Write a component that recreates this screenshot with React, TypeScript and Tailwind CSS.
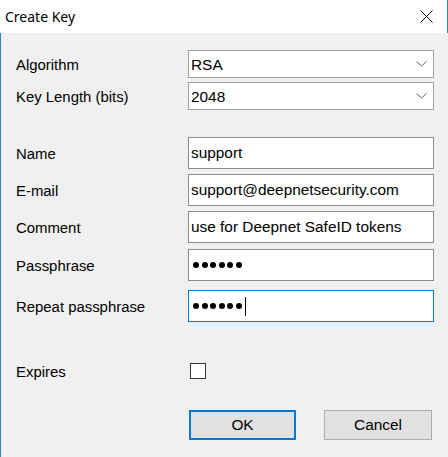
import React from "react";

const font = { fontFamily: '"Liberation Sans", Arial, sans-serif' };

function Chevron() {
  return (
    <svg width="11" height="6" viewBox="0 0 11 6" className="absolute right-[6px] top-1/2 -translate-y-1/2">
      <polyline points="0.5,0.5 5.5,5 10.5,0.5" fill="none" stroke="#606060" strokeWidth="1" />
    </svg>
  );
}

function Combo({ value }: { value: string }) {
  return (
    <div className="relative h-[28px] w-[246px] border border-[#a0a0a0] bg-white flex items-center pl-[2px] pt-[1px] text-black text-[15.4px]">
      {value}
      <Chevron />
    </div>
  );
}

function TextBox({ value, focused = false, password = false }: { value: string; focused?: boolean; password?: boolean }) {
  return (
    <div
      className={
        "h-[32px] w-[246px] border bg-white flex items-center pl-[2px] text-black text-[15.4px] " +
        (focused ? "border-[#0078d7]" : "border-[#8c8c8c]")
      }
    >
      {password ? (
        <div className="flex items-center gap-[2.5px] pl-[2px]">
          {Array.from({ length: 6 }).map((_, i) => (
            <span key={i} className="block w-[6px] h-[6px] rounded-full bg-black" />
          ))}
          {focused && <span className="block w-[1px] h-[19px] bg-black ml-[1px]" />}
        </div>
      ) : (
        value
      )}
    </div>
  );
}

function Row({ label, children, className = "" }: { label: string; children: React.ReactNode; className?: string }) {
  return (
    <div className={"flex items-center " + className}>
      <div className="w-[187px] pl-[15px] pt-[2px] text-black text-[14.9px]">{label}</div>
      {children}
    </div>
  );
}

export default function App() {
  return (
    <div className="w-[448px] h-[457px] bg-[#f0f0f0] flex flex-col leading-none" style={font}>
      <div className="h-[33px] bg-white flex items-center justify-between border-r border-[#2a84d2]">
        <span className="pl-[5px] text-[14px] text-black" style={{ fontFamily: '"Noto Sans", "Liberation Sans", sans-serif' }}>
          Create Key
        </span>
        <svg width="13" height="13" viewBox="0 0 13 13" className="mr-[14px]">
          <path d="M0.5 0.5 L12.5 12.5 M12.5 0.5 L0.5 12.5" stroke="#000" strokeWidth="1" />
        </svg>
      </div>
      <div className="flex-1 flex flex-col border-l border-[#2a84d2]">
        <Row label="Algorithm" className="mt-[17px]">
          <Combo value="RSA" />
        </Row>
        <Row label="Key Length (bits)" className="mt-[4px]">
          <Combo value="2048" />
        </Row>
        <Row label="Name" className="mt-[27px]">
          <TextBox value="support" />
        </Row>
        <Row label="E-mail" className="mt-[5px]">
          <TextBox value="support@deepnetsecurity.com" />
        </Row>
        <Row label="Comment" className="mt-[5px]">
          <TextBox value="use for Deepnet SafeID tokens" />
        </Row>
        <Row label="Passphrase" className="mt-[6px]">
          <TextBox value="" password />
        </Row>
        <Row label="Repeat passphrase" className="mt-[9px]">
          <TextBox value="" password focused />
        </Row>
        <Row label="Expires" className="mt-[41px]">
          <div className="ml-[2px] w-[16px] h-[16px] border border-[#333] bg-white" />
        </Row>
        <div className="flex mt-[30px] pl-[188px] gap-[28px]">
          <button className="w-[107px] h-[30px] border-2 border-[#0078d7] bg-[#e1e1e1] text-black text-[15.4px] flex items-center justify-center">
            OK
          </button>
          <button className="w-[108px] h-[30px] border border-[#adadad] bg-[#e1e1e1] text-black text-[15.4px] flex items-center justify-center">
            Cancel
          </button>
        </div>
      </div>
    </div>
  );
}
